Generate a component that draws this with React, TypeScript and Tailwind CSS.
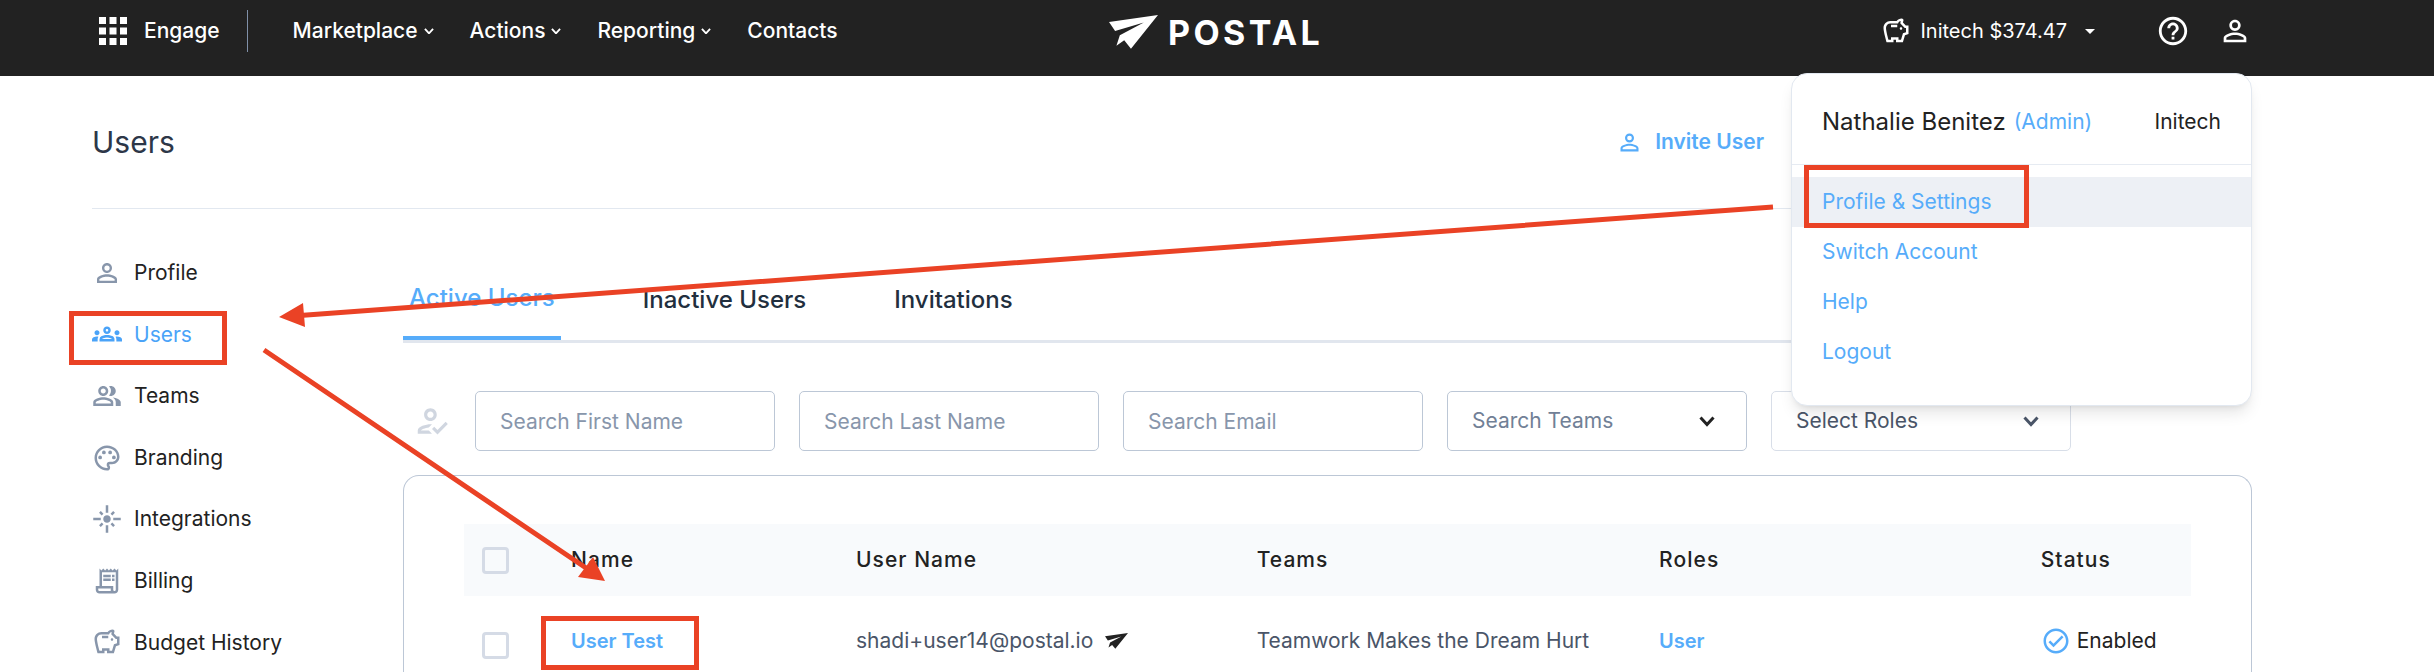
import { type FC, type ReactNode } from 'react'
import { type IconType } from 'react-icons'
import {
  MdApps,
  MdFlare,
  MdHelpOutline,
  MdOutlineCheckCircle,
  MdOutlineGroups,
  MdOutlineHowToReg,
  MdOutlinePalette,
  MdOutlinePeopleAlt,
  MdOutlineReceiptLong,
  MdOutlineSavings,
  MdPersonOutline,
} from 'react-icons/md'

const NAV_LINKS: Array<{ label: string; menu: boolean }> = [
  { label: 'Marketplace', menu: true },
  { label: 'Actions', menu: true },
  { label: 'Reporting', menu: true },
  { label: 'Contacts', menu: false },
]

const SIDEBAR_LINKS: Array<{ label: string; icon: IconType; active?: boolean }> = [
  { label: 'Profile', icon: MdPersonOutline },
  { label: 'Users', icon: MdOutlineGroups, active: true },
  { label: 'Teams', icon: MdOutlinePeopleAlt },
  { label: 'Branding', icon: MdOutlinePalette },
  { label: 'Integrations', icon: MdFlare },
  { label: 'Billing', icon: MdOutlineReceiptLong },
  { label: 'Budget History', icon: MdOutlineSavings },
]

const TEXT_FILTERS = ['Search First Name', 'Search Last Name', 'Search Email']

const Chevron: FC<{ className?: string }> = ({ className }) => (
  <svg viewBox="0 0 16 11" fill="none" stroke="currentColor" strokeWidth="3" className={className}>
    <path d="M1.5 1.5 8 8.5l6.5-7" />
  </svg>
)

const PaperPlane: FC<{ className?: string }> = ({ className }) => (
  <svg viewBox="0 0 145 100" fill="currentColor" className={className}>
    <path d="M0 21 145 0 65 100 45 75 22 91 32 60 103 22 18 47z" />
  </svg>
)

const Header: FC = () => (
  <header className="relative flex h-[76px] shrink-0 items-start justify-between bg-[#222222] pl-[92px] pr-[182px] text-white">
    <div className="flex h-[62px] items-center text-[21px] font-medium">
      <button className="flex items-center gap-[10px]">
        <MdApps className="size-[42px]" />
        Engage
      </button>
      <div className="ml-[27px] mr-[45px] h-[42px] w-px bg-[#8090a8]" />
      <nav className="flex gap-9">
        {NAV_LINKS.map((link) => (
          <a key={link.label} href="#" className="flex items-center gap-[6px]">
            {link.label}
            {link.menu && <Chevron className="w-[10px]" />}
          </a>
        ))}
      </nav>
    </div>

    <a
      href="#"
      aria-label="Postal"
      className="absolute left-1/2 top-[14px] ml-[-108px] flex h-9 items-center gap-[10px]"
    >
      <PaperPlane className="w-[49px]" />
      <span className="text-[34px] font-bold tracking-widest">POSTAL</span>
    </a>

    <div className="flex h-[62px] items-center text-[20px]">
      <button className="flex items-center">
        <MdOutlineSavings className="mr-[9px] size-[30px]" />
        Initech $374.47
        <svg viewBox="0 0 10 5" fill="currentColor" className="ml-[18px] w-[10px]">
          <path d="M0 0h10L5 5z" />
        </svg>
      </button>
      <button aria-label="Help" className="ml-[61px]">
        <MdHelpOutline className="size-[34px]" />
      </button>
      <button aria-label="Account" className="ml-7">
        <MdPersonOutline className="size-[34px]" />
      </button>
    </div>

    <AccountMenu />
  </header>
)

const AccountMenu: FC = () => (
  <div className="absolute right-[182px] top-[73px] z-10 w-[461px] rounded-2xl border border-[#e2e8f0] bg-white pb-7 text-[#222222] shadow-lg">
    <div className="flex h-[91px] items-center border-b border-[#e6ebf2] px-[30px] pt-[6px]">
      <span className="text-[24px]">Nathalie Benitez</span>
      <span className="ml-2 text-[21px] text-[#56acfa]">(Admin)</span>
      <span className="ml-auto text-[21px]">Initech</span>
    </div>
    <ul className="pt-3 text-[21px] text-[#56acfa]">
      <li className="bg-[#edf0f5]">
        <MenuLink>Profile &amp; Settings</MenuLink>
      </li>
      <li>
        <MenuLink>Switch Account</MenuLink>
      </li>
      <li>
        <MenuLink>Help</MenuLink>
      </li>
      <li>
        <MenuLink>Logout</MenuLink>
      </li>
    </ul>
  </div>
)

const MenuLink: FC<{ children: ReactNode }> = ({ children }) => (
  <a href="#" className="flex h-[50px] items-center px-[30px]">
    {children}
  </a>
)

const Sidebar: FC = () => (
  <nav className="flex h-[431px] w-[311px] shrink-0 flex-col text-[21px]">
    {SIDEBAR_LINKS.map(({ label, icon: Icon, active }) => (
      <a
        key={label}
        href="#"
        className={
          active
            ? 'flex flex-1 items-center gap-3 text-[#4aa3f8]'
            : 'flex flex-1 items-center gap-3 text-[#222222]'
        }
      >
        <Icon className={active ? 'size-[30px]' : 'size-[30px] text-[#8896ab]'} />
        {label}
      </a>
    ))}
  </nav>
)

const Tabs: FC = () => (
  <div className="flex h-[84px] gap-[76px] border-b-[3px] border-[#e1e6ee] text-[24px] font-medium text-[#222f3e]">
    <button className="border-b-4 border-[#56acfa] px-[6px] text-[#56acfa]">Active Users</button>
    <button className="px-[6px]">Inactive Users</button>
    <button className="px-[6px]">Invitations</button>
  </div>
)

const Filters: FC = () => (
  <div className="mt-12 flex items-center gap-6 text-[21px]">
    <MdOutlineHowToReg className="ml-[10px] size-[38px] text-[#d0d6e0]" />
    {TEXT_FILTERS.map((label) => (
      <input
        key={label}
        type="text"
        aria-label={label}
        placeholder={label}
        className="h-[60px] w-[300px] rounded-[5px] border border-[#bcc7d6] px-6 placeholder:text-[#8896ab]"
      />
    ))}
    <div className="relative">
      <select
        aria-label="Search Teams"
        className="h-[60px] w-[300px] appearance-none rounded-[5px] border border-[#bcc7d6] bg-white px-6 text-[#718096]"
      >
        <option>Search Teams</option>
      </select>
      <Chevron className="pointer-events-none absolute right-8 top-[25px] w-4 text-[#222222]" />
    </div>
    <div className="relative">
      <select
        aria-label="Select Roles"
        className="h-[60px] w-[300px] appearance-none rounded-[5px] border border-[#d8dee8] bg-white px-6 text-[#4a5568]"
      >
        <option>Select Roles</option>
      </select>
      <Chevron className="pointer-events-none absolute right-8 top-[25px] w-4 text-[#4a5568]" />
    </div>
  </div>
)

const Checkbox: FC<{ label: string }> = ({ label }) => (
  <input
    type="checkbox"
    aria-label={label}
    className="block size-[27px] appearance-none rounded-[4px] border-[3px] border-[#d5dbe6]"
  />
)

const UsersTable: FC = () => (
  <div className="mt-6 flex-1 rounded-t-[16px] border border-b-0 border-[#bcc7d6] px-[60px] pt-12">
    <table className="w-full table-fixed text-left text-[21px] text-[#4a5568]">
      <thead className="bg-[#f8fafc] text-[#222222]">
        <tr className="h-[72px]">
          <th className="w-[6.2%] pl-[18px]">
            <Checkbox label="Select all users" />
          </th>
          <th className="w-[16.5%] font-medium tracking-wider">Name</th>
          <th className="w-[23.2%] font-medium tracking-wider">User Name</th>
          <th className="w-[23.3%] font-medium tracking-wider">Teams</th>
          <th className="w-[22.1%] font-medium tracking-wider">Roles</th>
          <th className="font-medium tracking-wider">Status</th>
        </tr>
      </thead>
      <tbody>
        <tr className="h-[90px]">
          <td className="pl-[18px] pt-2">
            <Checkbox label="Select User Test" />
          </td>
          <td>
            <a href="#" className="text-[20px] font-semibold text-[#56acfa]">
              User Test
            </a>
          </td>
          <td>
            <span className="flex items-center gap-3">
              shadi+user14@postal.io
              <PaperPlane className="w-[23px] text-[#222222]" />
            </span>
          </td>
          <td>Teamwork Makes the Dream Hurt</td>
          <td>
            <a href="#" className="text-[20px] font-semibold text-[#56acfa]">
              User
            </a>
          </td>
          <td>
            <span className="flex items-center gap-[6px] text-[#222222]">
              <MdOutlineCheckCircle className="size-[30px] text-[#56acfa]" />
              Enabled
            </span>
          </td>
        </tr>
      </tbody>
    </table>
  </div>
)

// Red call-outs: menu entry -> sidebar entry -> user row
const Annotations: FC = () => (
  <svg
    width="2434"
    height="672"
    fill="none"
    stroke="#ea4225"
    strokeWidth="5"
    className="pointer-events-none absolute left-0 top-0 z-20"
  >
    <rect x="1806.5" y="167.5" width="220" height="58" />
    <rect x="71.5" y="313.5" width="153" height="49" />
    <rect x="543.5" y="618.5" width="153" height="49" />
    <path d="M1773 207 300 315.5M264 350l328 222" />
    <path d="m279 317 24-14 2 24zM605 581l-12-24-15 20z" fill="#ea4225" stroke="none" />
  </svg>
)

const App: FC = () => {
  return (
    <div className="relative flex h-screen flex-col overflow-hidden bg-white font-['Inter',sans-serif]">
      <Header />
      <div className="flex flex-1 flex-col pl-[92px] pr-[182px]">
        <div className="flex h-[133px] shrink-0 items-center justify-between border-b border-[#e2e8f0]">
          <h1 className="text-[30px] text-[#2d3748]">Users</h1>
          <button className="mr-[488px] flex items-center gap-3 text-[21px] font-semibold text-[#56acfa]">
            <MdPersonOutline className="size-[27px]" />
            Invite User
          </button>
        </div>
        <div className="flex flex-1 pt-[33px]">
          <Sidebar />
          <main className="flex flex-1 flex-col pt-[17px]">
            <Tabs />
            <Filters />
            <UsersTable />
          </main>
        </div>
      </div>
      <Annotations />
    </div>
  )
}

export default App
